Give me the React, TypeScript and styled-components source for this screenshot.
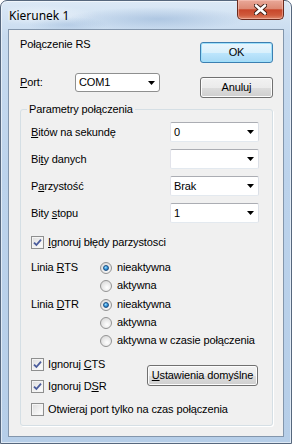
import styled, { createGlobalStyle } from "styled-components";

const GlobalStyle = createGlobalStyle`
  html, body {
    margin: 0;
    padding: 0;
    background: #ffffff;
  }
  body {
    font-family: "Liberation Sans", Arial, sans-serif;
    font-size: 11px;
    letter-spacing: -0.13px;
    color: #000;
  }
`;

const Key = ({ children }: { children: string }) => <AccessKey>{children}</AccessKey>;

const CheckIcon = () => (
  <svg width="9" height="9" viewBox="0 0 9 9">
    <path d="M1 4.6 L3.4 7 L8 1.6" fill="none" stroke="#4a5c9c" strokeWidth="1.8" />
  </svg>
);

const Checkbox = ({ checked, children }: { checked?: boolean; children: React.ReactNode }) => (
  <CheckRow>
    <CheckBox>{checked && <CheckIcon />}</CheckBox>
    <span>{children}</span>
  </CheckRow>
);

const Radio = ({ checked, children }: { checked?: boolean; children: React.ReactNode }) => (
  <RadioRow>
    <RadioCircle>{checked && <RadioDot />}</RadioCircle>
    <span>{children}</span>
  </RadioRow>
);

const Combo = ({ value, $dark }: { value: string; $dark?: boolean }) => (
  <ComboBox $dark={$dark}>
    <span>{value}</span>
    <svg width="7" height="4" viewBox="0 0 7 4">
      <path d="M0 0 H7 L3.5 4 Z" fill="#000" />
    </svg>
  </ComboBox>
);

const App = () => {
  return (
    <>
      <GlobalStyle />
      <Window>
        <TitleBar>
          <Title>Kierunek 1</Title>
          <CloseButton>
            <svg width="13" height="11" viewBox="0 0 13 11">
              <path d="M2 1.5 L11 9.5 M11 1.5 L2 9.5" stroke="#3d1c14" strokeWidth="4.4" strokeLinecap="round" />
              <path d="M2 1.5 L11 9.5 M11 1.5 L2 9.5" stroke="#ffffff" strokeWidth="2.6" strokeLinecap="round" />
            </svg>
          </CloseButton>
        </TitleBar>
        <Client>
          <Header>
            <HeaderLeft>
              <Label>Połączenie RS</Label>
              <PortRow>
                <PortLabel>
                  <Key>P</Key>ort:
                </PortLabel>
                <Combo value="COM1" $dark />
              </PortRow>
            </HeaderLeft>
            <HeaderRight>
              <Button $width={73} $default>
                OK
              </Button>
              <Button $width={73}>Anuluj</Button>
            </HeaderRight>
          </Header>

          <Group>
            <Legend>Parametry połączenia</Legend>
            <ComboGrid>
              <Label>
                <Key>B</Key>itów na sekundę
              </Label>
              <Combo value="0" />
              <Label>
                Bi<Key>t</Key>y danych
              </Label>
              <Combo value="" />
              <Label>
                P<Key>a</Key>rzystość
              </Label>
              <Combo value="Brak" />
              <Label>
                Bity <Key>s</Key>topu
              </Label>
              <Combo value="1" />
            </ComboGrid>

            <Spaced $top={13}>
              <Checkbox checked>
                <Key>I</Key>gnoruj błędy parzystosci
              </Checkbox>
            </Spaced>

            <RadioBlock $top={12}>
              <Label>
                Linia <Key>R</Key>TS
              </Label>
              <RadioList>
                <Radio checked>nieaktywna</Radio>
                <Radio>aktywna</Radio>
              </RadioList>
            </RadioBlock>

            <RadioBlock $top={6}>
              <Label>
                Linia <Key>D</Key>TR
              </Label>
              <RadioList>
                <Radio checked>nieaktywna</Radio>
                <Radio>aktywna</Radio>
                <Radio>aktywna w czasie połączenia</Radio>
              </RadioList>
            </RadioBlock>

            <BottomRow>
              <CheckColumn>
                <Checkbox checked>
                  Ignoruj <Key>C</Key>TS
                </Checkbox>
                <Checkbox checked>
                  Ignoruj D<Key>S</Key>R
                </Checkbox>
              </CheckColumn>
              <Button $width={111}>
                <Key>U</Key>stawienia domyślne
              </Button>
            </BottomRow>

            <Spaced $top={10}>
              <Checkbox>Otwieraj port tylko na czas połączenia</Checkbox>
            </Spaced>
          </Group>
        </Client>
      </Window>
    </>
  );
};

const Window = styled.div`
  box-sizing: border-box;
  width: 292px;
  height: 444px;
  display: flex;
  flex-direction: column;
  padding: 0 7px 6px;
  border: 1px solid #56677d;
  border-radius: 7px 7px 0 0;
  background: linear-gradient(180deg, #dce9f6 0%, #c8dbef 8%, #bcd3ec 40%, #b6cee8 100%);
  box-shadow: inset 0 0 0 1px rgba(255, 255, 255, 0.55);
`;

const TitleBar = styled.div`
  height: 28px;
  display: flex;
  justify-content: space-between;
  align-items: flex-start;
  background: radial-gradient(ellipse 90px 12px at 150px 18px, rgba(140, 172, 210, 0.5), transparent),
    radial-gradient(ellipse 40px 8px at 60px 24px, rgba(140, 172, 210, 0.35), transparent),
    radial-gradient(ellipse 60px 10px at 30px 14px, rgba(255, 255, 255, 0.5), transparent);
`;

const Title = styled.div`
  padding: 7px 0 0 1px;
  font-family: "Noto Sans", "Open Sans", sans-serif;
  font-size: 12px;
  line-height: 16px;
  letter-spacing: 0;
  color: #000;
`;

const CloseButton = styled.div`
  box-sizing: border-box;
  width: 47px;
  height: 20px;
  margin-top: -1px;
  display: flex;
  align-items: center;
  justify-content: center;
  border: 1px solid #6a2a1d;
  border-top: none;
  border-radius: 0 0 5px 5px;
  background: linear-gradient(180deg, #e9a899 0%, #dd8a75 45%, #c8462a 52%, #cf5a3c 80%, #e0896c 100%);
  box-shadow: inset 0 0 0 1px rgba(255, 210, 200, 0.45);
`;

const Client = styled.div`
  flex: 1;
  display: flex;
  flex-direction: column;
  padding: 8px 10px 9px 11px;
  border: 1px solid #8396ac;
  background: #f0f0f0;
`;

const Header = styled.div`
  display: flex;
  justify-content: space-between;
  align-items: flex-start;
`;

const HeaderLeft = styled.div`
  display: flex;
  flex-direction: column;
  gap: 22px;
`;

const HeaderRight = styled.div`
  display: flex;
  flex-direction: column;
  gap: 14px;
  margin-top: 4px;
`;

const Label = styled.span`
  line-height: 13px;
  white-space: nowrap;
`;

const AccessKey = styled.u`
  text-decoration: underline;
  text-underline-offset: 1px;
`;

const PortRow = styled.div`
  display: flex;
  align-items: center;
`;

const PortLabel = styled(Label)`
  width: 55px;
`;

const ComboBox = styled.div<{ $dark?: boolean }>`
  box-sizing: border-box;
  width: ${(p) => (p.$dark ? 85 : 89)}px;
  height: ${(p) => (p.$dark ? 19 : 20)}px;
  display: flex;
  align-items: center;
  justify-content: space-between;
  padding: 0 4px 0 3px;
  background: #fff;
  border: 1px solid;
  border-color: ${(p) => (p.$dark ? "#8e8f8f" : "#abadb3 #dbdfe6 #e3e9ef #e2e3ea")};
  border-radius: ${(p) => (p.$dark ? 3 : 2)}px;
  line-height: 13px;
`;

const Button = styled.div<{ $width: number; $default?: boolean }>`
  box-sizing: border-box;
  width: ${(p) => p.$width}px;
  height: 21px;
  display: flex;
  align-items: center;
  justify-content: center;
  border: 1px solid ${(p) => (p.$default ? "#3c7fb1" : "#707070")};
  border-radius: 3px;
  background: ${(p) =>
    p.$default
      ? "linear-gradient(180deg, #eaf6fd 0%, #d9f0fc 50%, #bee6fd 51%, #a7d9f5 100%)"
      : "linear-gradient(180deg, #f2f2f2 0%, #ebebeb 50%, #dddddd 51%, #cfcfcf 100%)"};
  box-shadow: inset 0 0 0 1px ${(p) => (p.$default ? "#9fe0fb" : "#fcfcfc")};
  line-height: 13px;
  white-space: nowrap;
`;

const Group = styled.fieldset`
  margin: 5px 0 0;
  padding: 6px 10px 9px;
  border: 1px solid #d5dfe5;
  border-radius: 3px;
  box-shadow: 1px 1px 0 #ffffff;
  display: flex;
  flex-direction: column;
`;

const Legend = styled.legend`
  margin-left: -4px;
  padding: 0 2px;
  line-height: 13px;
`;

const ComboGrid = styled.div`
  display: grid;
  grid-template-columns: 139px 89px;
  row-gap: 7px;
  align-items: center;
`;

const Spaced = styled.div<{ $top: number }>`
  margin-top: ${(p) => p.$top}px;
`;

const CheckRow = styled.div`
  display: flex;
  align-items: center;
  gap: 4px;
  height: 13px;
  line-height: 13px;
  white-space: nowrap;
`;

const CheckBox = styled.span`
  box-sizing: border-box;
  width: 13px;
  height: 13px;
  display: flex;
  align-items: center;
  justify-content: center;
  border: 1px solid #8e8f8f;
  background: linear-gradient(135deg, #dcdcdc 0%, #f2f2f2 60%, #ffffff 100%);
  box-shadow: inset 0 0 0 1px #f4f4f4;
`;

const RadioBlock = styled.div<{ $top: number }>`
  display: grid;
  grid-template-columns: 69px auto;
  align-items: start;
  margin-top: ${(p) => p.$top}px;
`;

const RadioList = styled.div`
  display: flex;
  flex-direction: column;
  gap: 5px;
`;

const RadioRow = styled.div`
  display: flex;
  align-items: center;
  gap: 5px;
  height: 13px;
  line-height: 13px;
  white-space: nowrap;
`;

const RadioCircle = styled.span`
  box-sizing: border-box;
  width: 12px;
  height: 12px;
  display: flex;
  align-items: center;
  justify-content: center;
  border-radius: 50%;
  border: 1px solid #939393;
  background: radial-gradient(circle at 60% 65%, #ffffff 0%, #e6e6e6 55%, #cfcfcf 100%);
`;

const RadioDot = styled.span`
  width: 6px;
  height: 6px;
  border-radius: 50%;
  border: 1px solid #1d4f82;
  box-sizing: border-box;
  background: radial-gradient(circle at 40% 35%, #a4e4ff 0%, #3a9be0 45%, #12559e 100%);
`;

const BottomRow = styled.div`
  display: flex;
  align-items: center;
  margin-top: 11px;
`;

const CheckColumn = styled.div`
  width: 116px;
  display: flex;
  flex-direction: column;
  gap: 9px;
`;

export default App;
